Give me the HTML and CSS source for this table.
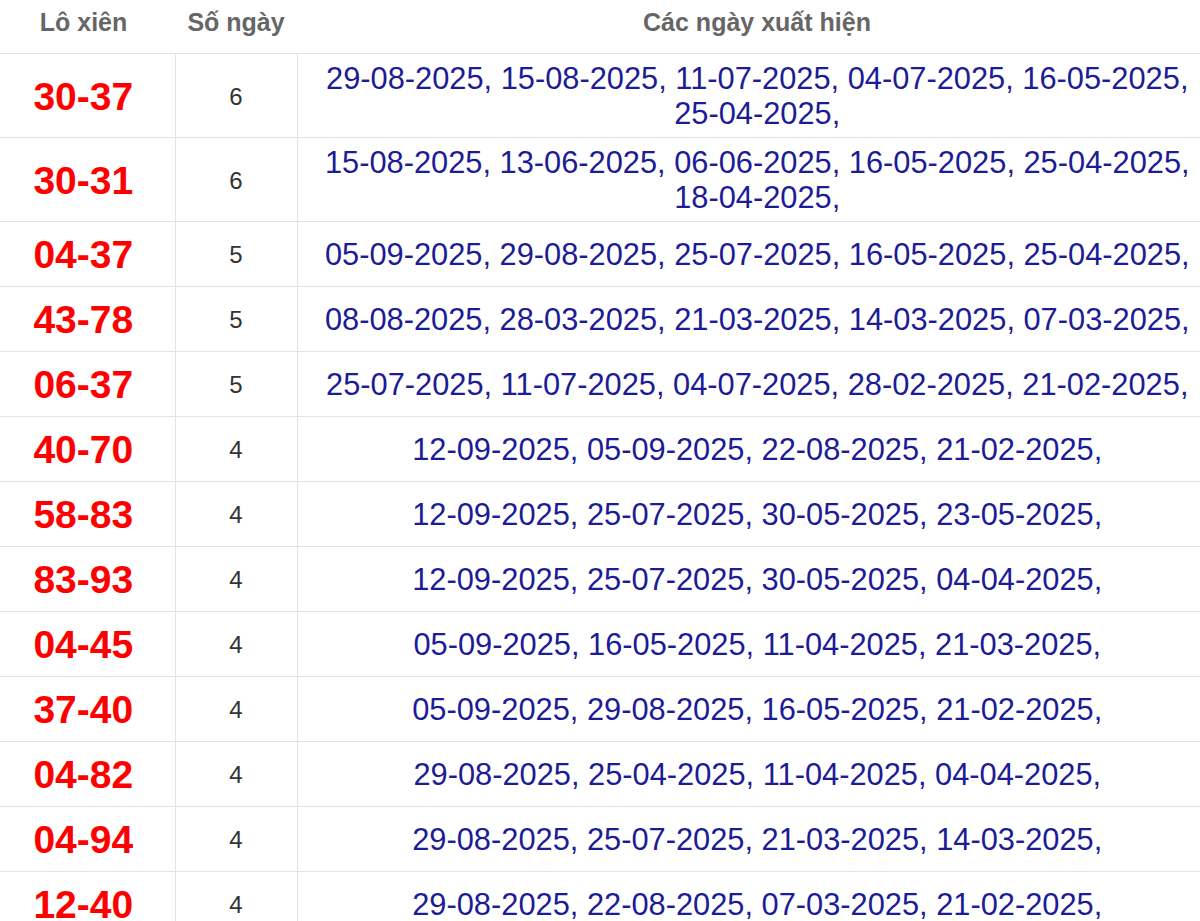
FILE: index.html
```html
<!DOCTYPE html>
<html lang="vi">
<head>
<meta charset="utf-8">
<title>Lô xiên</title>
<link rel="stylesheet" href="styles.css">
</head>
<body>
<table class="lx-table">
  <colgroup>
    <col class="c1"><col class="c2"><col class="c3">
  </colgroup>
  <thead>
    <tr><th class="col-lo">Lô xiên</th><th class="col-so">Số ngày</th><th class="col-ngay">Các ngày xuất hiện</th></tr>
  </thead>
  <tbody>
    <tr><td class="col-lo">30-37</td><td class="col-so">6</td><td class="col-ngay">29-08-2025, 15-08-2025, 11-07-2025, 04-07-2025, 16-05-2025, 25-04-2025, </td></tr>
    <tr><td class="col-lo">30-31</td><td class="col-so">6</td><td class="col-ngay">15-08-2025, 13-06-2025, 06-06-2025, 16-05-2025, 25-04-2025, 18-04-2025, </td></tr>
    <tr><td class="col-lo">04-37</td><td class="col-so">5</td><td class="col-ngay">05-09-2025, 29-08-2025, 25-07-2025, 16-05-2025, 25-04-2025, </td></tr>
    <tr><td class="col-lo">43-78</td><td class="col-so">5</td><td class="col-ngay">08-08-2025, 28-03-2025, 21-03-2025, 14-03-2025, 07-03-2025, </td></tr>
    <tr><td class="col-lo">06-37</td><td class="col-so">5</td><td class="col-ngay">25-07-2025, 11-07-2025, 04-07-2025, 28-02-2025, 21-02-2025, </td></tr>
    <tr><td class="col-lo">40-70</td><td class="col-so">4</td><td class="col-ngay">12-09-2025, 05-09-2025, 22-08-2025, 21-02-2025, </td></tr>
    <tr><td class="col-lo">58-83</td><td class="col-so">4</td><td class="col-ngay">12-09-2025, 25-07-2025, 30-05-2025, 23-05-2025, </td></tr>
    <tr><td class="col-lo">83-93</td><td class="col-so">4</td><td class="col-ngay">12-09-2025, 25-07-2025, 30-05-2025, 04-04-2025, </td></tr>
    <tr><td class="col-lo">04-45</td><td class="col-so">4</td><td class="col-ngay">05-09-2025, 16-05-2025, 11-04-2025, 21-03-2025, </td></tr>
    <tr><td class="col-lo">37-40</td><td class="col-so">4</td><td class="col-ngay">05-09-2025, 29-08-2025, 16-05-2025, 21-02-2025, </td></tr>
    <tr><td class="col-lo">04-82</td><td class="col-so">4</td><td class="col-ngay">29-08-2025, 25-04-2025, 11-04-2025, 04-04-2025, </td></tr>
    <tr><td class="col-lo">04-94</td><td class="col-so">4</td><td class="col-ngay">29-08-2025, 25-07-2025, 21-03-2025, 14-03-2025, </td></tr>
    <tr><td class="col-lo">12-40</td><td class="col-so">4</td><td class="col-ngay">29-08-2025, 22-08-2025, 07-03-2025, 21-02-2025, </td></tr>
  </tbody>
</table>
</body>
</html>
```

FILE: styles.css
```css
html, body {
  margin: 0;
  padding: 0;
  background: #ffffff;
}
body {
  font-family: "Liberation Sans", Arial, sans-serif;
}
.lx-table {
  width: 1200px;
  border-collapse: collapse;
  table-layout: fixed;
}
.c1 { width: 175px; }
.c2 { width: 122px; }
.c3 { width: 903px; }

.lx-table th {
  font-size: 25px;
  font-weight: bold;
  color: #666666;
  line-height: 30px;
  padding: 7px 0 16px;
  text-align: center;
  border-bottom: 1px solid #e2e2e2;
}
.lx-table td {
  text-align: center;
  vertical-align: middle;
  padding: 7px 0 6px;
  border-bottom: 1px solid #e2e2e2;
}
.lx-table td + td {
  border-left: 1px solid #e2e2e2;
}
.col-lo {
  padding-right: 8px !important;
}
.col-ngay {
  padding-left: 17px !important;
}
td.col-lo {
  font-size: 39px;
  font-weight: bold;
  color: #ff0000;
  line-height: 51px;
}
td.col-so {
  font-size: 24px;
  color: #333333;
  line-height: 35px;
}
td.col-ngay {
  font-size: 30.8px;
  color: #1c1c96;
  line-height: 35px;
}
```
